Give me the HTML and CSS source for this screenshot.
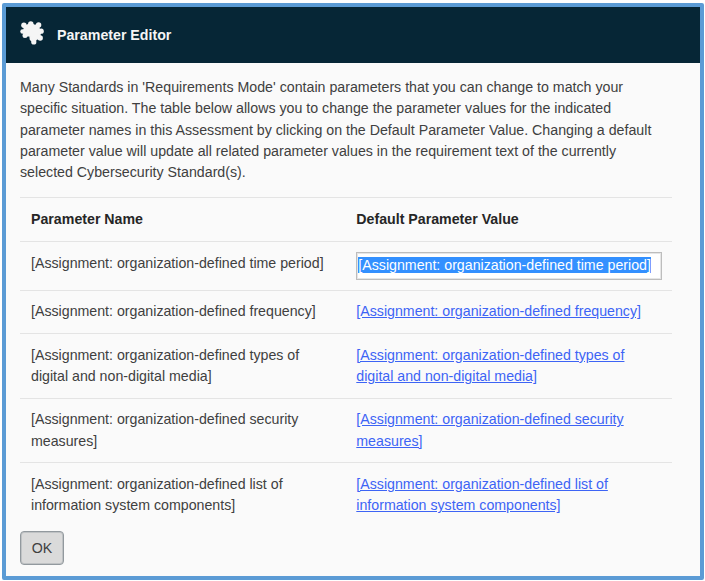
FILE: index.html
```html
<!DOCTYPE html>
<html lang="en">
<head>
<meta charset="utf-8">
<title>Parameter Editor</title>
<link rel="stylesheet" href="styles.css">
</head>
<body>
<main class="dialog">
  <header class="titlebar">
    <svg class="icon" viewBox="0 0 24 24" width="24" height="24" aria-hidden="true"><path class="body" d="M3.500 4.500L7 4.500L10.500 2.500L14.500 4.500L18.500 3.800L19 8L21.300 10L19.800 13.500L20 17L16.500 18L14 21L10.500 18.500L10 14.500L5 14.800L3 10.300L4.500 8Z"/><circle cx="3.900" cy="4.200" r="2.700"/><circle cx="10.800" cy="2.900" r="2.700"/><circle cx="18.600" cy="3.900" r="2.700"/><circle cx="21.200" cy="10.200" r="2.600"/><circle cx="20.200" cy="17" r="2.700"/><circle cx="13.800" cy="20.900" r="2.600"/><circle cx="5" cy="14.600" r="2.500"/><circle cx="2.500" cy="10.500" r="2.200"/></svg>
    <h1>Parameter Editor</h1>
  </header>
  <section class="content">
    <p class="intro">Many Standards in 'Requirements Mode' contain parameters that you can change to match your<br>specific situation. The table below allows you to change the parameter values for the indicated<br>parameter names in this Assessment by clicking on the Default Parameter Value. Changing a default<br>parameter value will update all related parameter values in the requirement text of the currently<br>selected Cybersecurity Standard(s).</p>
    <table class="params">
      <thead>
        <tr><th>Parameter Name</th><th>Default Parameter Value</th></tr>
      </thead>
      <tbody>
        <tr class="editing"><td>[Assignment: organization-defined time period]</td><td><div class="field"><span class="selected">[Assignment: organization-defined time period]</span></div></td></tr>
        <tr><td>[Assignment: organization-defined frequency]</td><td><a href="#">[Assignment: organization-defined frequency]</a></td></tr>
        <tr class="tall"><td>[Assignment: organization-defined types of<br>digital and non-digital media]</td><td><a href="#">[Assignment: organization-defined types of<br>digital and non-digital media]</a></td></tr>
        <tr class="tall"><td>[Assignment: organization-defined security<br>measures]</td><td><a href="#">[Assignment: organization-defined security<br>measures]</a></td></tr>
        <tr class="tall"><td>[Assignment: organization-defined list of<br>information system components]</td><td><a href="#">[Assignment: organization-defined list of<br>information system components]</a></td></tr>
      </tbody>
    </table>
    <button class="ok" type="button">OK</button>
  </section>
</main>
</body>
</html>
```
FILE: styles.css
```css
* { box-sizing: border-box; }
body {
  margin: 0;
  padding: 3px 1px 1px 2px;
  height: 581px;
  background: #fff;
  color: #404040;
  font: 14.2px/21.3px "Liberation Sans", Arial, sans-serif;
}
.dialog {
  height: 577px;
  border: 4px solid #5b9bd5;
  border-radius: 2px;
  background: #fafafa;
}
.titlebar {
  display: flex;
  align-items: center;
  gap: 13px;
  height: 56px;
  padding-left: 14px;
  background: #062636;
}
.icon { margin-top: -4px; fill: #f5f5f5; }
.icon .body { stroke: #f5f5f5; stroke-width: 1.6; stroke-linejoin: round; }
h1 { margin: 0; color: #f5f5f5; font-size: 14.2px; line-height: 21px; }
.content { padding: 14px 28px 0 14px; }
.intro { margin: 0; font-size: 14.215px; white-space: nowrap; }
.params {
  width: 652px;
  margin-top: 14px;
  border-collapse: separate;
  border-spacing: 0;
  table-layout: fixed;
}
th, td {
  height: 43.5px;
  padding: 10.5px 0 0 11px;
  border-top: 1px solid #e4e4e4;
  text-align: left;
  vertical-align: top;
  white-space: nowrap;
}
th { padding-top: 11px; }
th + th, td + td { padding-left: 10.3px; }
th { color: #262626; }
.editing td { height: 49px; }
.editing td:first-child { padding-top: 11px; }
.editing td + td { padding-top: 10px; }
.tall td { height: 64.5px; }
.field {
  width: 306px;
  height: 28px;
  padding: 1px;
  border: 1px solid #bdbdbd;
  box-shadow: inset 0 0 0 1px #e6e6e6;
  background: #fff;
  line-height: 23px;
}
.selected { background: #3390ff; color: #fff; }
a { color: #3d64f5; text-decoration: underline; }
.ok {
  display: block;
  width: 44px;
  height: 34px;
  margin-top: 4px;
  padding: 1px 0 0;
  border: 1px solid #92999e;
  box-shadow: inset 0 0 0 1px #bfc2c4;
  border-radius: 4px;
  background: #dadada;
  color: #404040;
  font: inherit;
}
```
